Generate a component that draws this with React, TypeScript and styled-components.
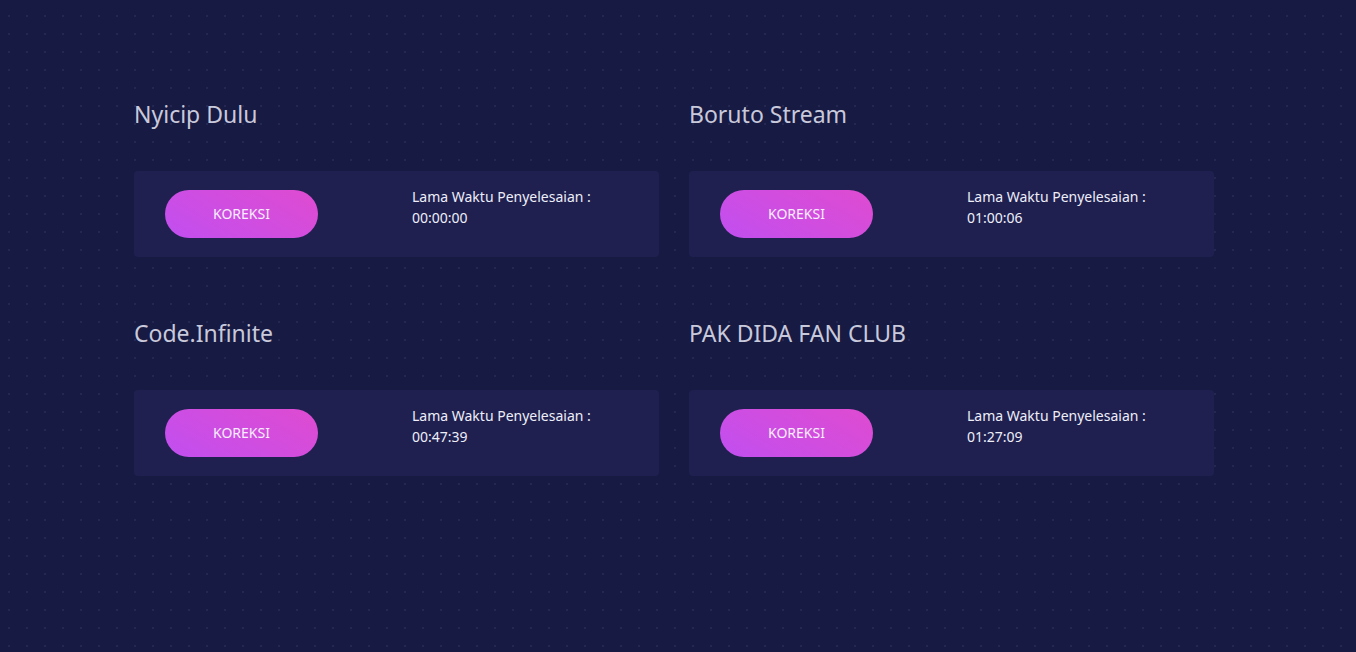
import React from 'react'
import styled, { createGlobalStyle } from 'styled-components'

type Result = {
  team: string
  time: string
}

const results: Result[] = [
  { team: 'Nyicip Dulu', time: '00:00:00' },
  { team: 'Boruto Stream', time: '01:00:06' },
  { team: 'Code.Infinite', time: '00:47:39' },
  { team: 'PAK DIDA FAN CLUB', time: '01:27:09' },
]

const GlobalStyle = createGlobalStyle`
  html, body {
    margin: 0;
    padding: 0;
  }
  body {
    min-height: 100vh;
    background-color: #171a42;
    background-image: radial-gradient(circle, rgba(52, 56, 100, 0.45) 1px, transparent 1.3px);
    background-size: 18px 18px;
    background-position: 0 7px;
    font-family: 'Noto Sans', 'Open Sans', sans-serif;
  }
`

export default function App() {
  return (
    <>
      <GlobalStyle />
      <Page>
        <Grid>
          {results.map((r) => (
            <Section key={r.team}>
              <Title>{r.team}</Title>
              <Card>
                <Button type="button">KOREKSI</Button>
                <Info>
                  <div>Lama Waktu Penyelesaian :</div>
                  <div>{r.time}</div>
                </Info>
              </Card>
            </Section>
          ))}
        </Grid>
      </Page>
    </>
  )
}

const Page = styled.main({
  padding: '96px 0 0 134px',
  minHeight: '652px',
  boxSizing: 'border-box',
})

const Grid = styled.div({
  display: 'grid',
  gridTemplateColumns: '525px 525px',
  columnGap: '30px',
  rowGap: '58px',
})

const Section = styled.section({
  display: 'flex',
  flexDirection: 'column',
})

const Title = styled.h2({
  margin: 0,
  fontSize: '23px',
  lineHeight: '36px',
  fontWeight: 400,
  color: '#c9c9dc',
})

const Card = styled.div({
  marginTop: '39px',
  height: '86px',
  boxSizing: 'border-box',
  display: 'flex',
  alignItems: 'center',
  padding: '0 0 0 31px',
  backgroundColor: '#1f2050',
  borderRadius: '4px',
})

const Button = styled.button({
  width: '153px',
  height: '48px',
  padding: '0 0 2px',
  border: 'none',
  borderRadius: '24px',
  background: 'linear-gradient(30deg, #c14ff0 0%, #df4bd0 100%)',
  color: '#f6eefc',
  fontFamily: "'Noto Sans', sans-serif",
  fontSize: '14px',
  cursor: 'pointer',
  flexShrink: 0,
})

const Info = styled.div({
  alignSelf: 'flex-start',
  marginTop: '15px',
  marginLeft: '94px',
  fontSize: '14px',
  lineHeight: '21px',
  color: '#eeeef8',
})
